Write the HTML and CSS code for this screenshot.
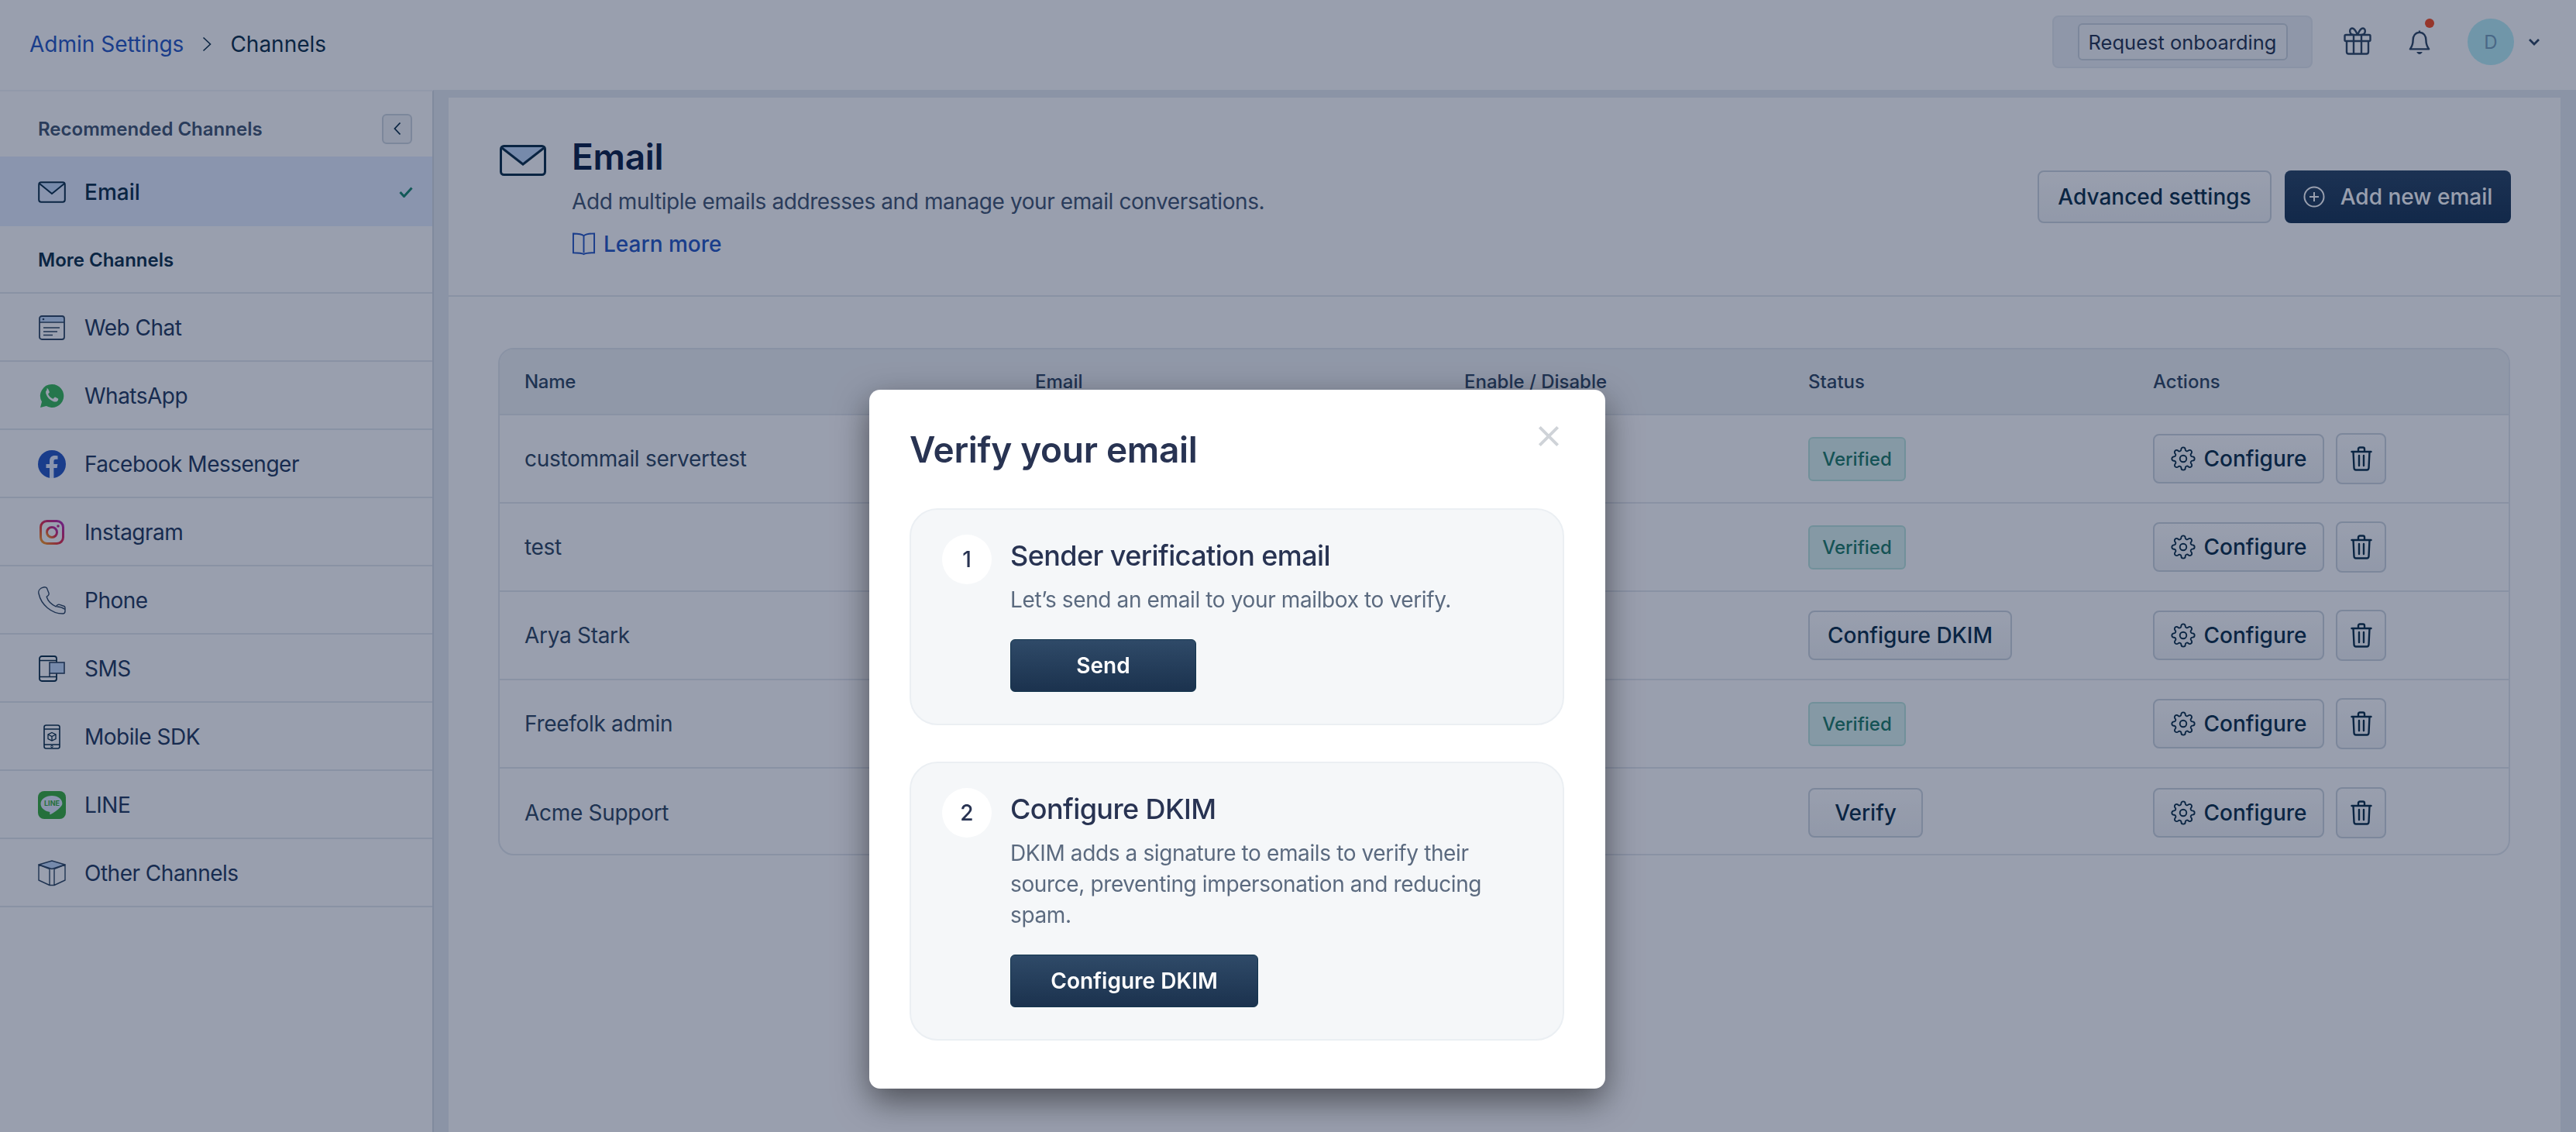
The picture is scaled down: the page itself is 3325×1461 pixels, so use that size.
FILE: index.html

```html
<!DOCTYPE html>
<html lang="en">
<head>
  <meta charset="UTF-8" />
  <meta name="viewport" content="width=device-width, initial-scale=1.0" />
  <title>Channels - Email</title>
  <link rel="stylesheet" href="styles.css">
</head>
<body>
  <svg class="defs" width="0" height="0">
    <symbol id="gear" viewBox="0 0 24 24">
      <circle cx="12" cy="12" r="3.2" fill="none" stroke="currentColor" stroke-width="1.4"/>
      <path fill="none" stroke="currentColor" stroke-width="1.4" d="M19.4 15a1.65 1.65 0 0 0 .33 1.82l.06.06a2 2 0 0 1 0 2.83 2 2 0 0 1-2.83 0l-.06-.06a1.65 1.65 0 0 0-1.82-.33 1.65 1.65 0 0 0-1 1.51V21a2 2 0 0 1-2 2 2 2 0 0 1-2-2v-.09A1.65 1.65 0 0 0 9 19.4a1.65 1.65 0 0 0-1.82.33l-.06.06a2 2 0 0 1-2.83 0 2 2 0 0 1 0-2.83l.06-.06a1.65 1.65 0 0 0 .33-1.82 1.65 1.65 0 0 0-1.51-1H3a2 2 0 0 1-2-2 2 2 0 0 1 2-2h.09A1.65 1.65 0 0 0 4.6 9a1.65 1.65 0 0 0-.33-1.82l-.06-.06a2 2 0 0 1 0-2.83 2 2 0 0 1 2.83 0l.06.06a1.65 1.65 0 0 0 1.82.33H9a1.65 1.65 0 0 0 1-1.51V3a2 2 0 0 1 2-2 2 2 0 0 1 2 2v.09a1.65 1.65 0 0 0 1 1.51 1.65 1.65 0 0 0 1.82-.33l.06-.06a2 2 0 0 1 2.83 0 2 2 0 0 1 0 2.83l-.06.06a1.65 1.65 0 0 0-.33 1.82V9a1.65 1.65 0 0 0 1.51 1H21a2 2 0 0 1 2 2 2 2 0 0 1-2 2h-.09a1.65 1.65 0 0 0-1.51 1z"/>
    </symbol>
    <symbol id="trash" viewBox="0 0 28 32">
      <path fill="none" stroke="currentColor" stroke-width="2.4" stroke-linecap="round" stroke-linejoin="round" d="M1.5 7h25M10 7V3.5c0-1 .8-2 2-2h4c1.200 0 2 1 2 2V7M3.500 7l1 21c.1 1.600 1 2.500 2.500 2.500h14c1.500 0 2.400-.9 2.500-2.500l1-21M11 12v13M17 12v13"/>
    </symbol>
  </svg>

  <header class="topbar">
    <nav class="crumbs">
      <a class="crumb-link">Admin Settings</a>
      <svg class="crumb-sep" viewBox="0 0 12 20"><path d="M1.500 1.500L10.500 10l-9 8.500" fill="none" stroke="currentColor" stroke-width="1.600"/></svg>
      <span class="crumb-here">Channels</span>
    </nav>
    <div class="top-right">
      <div class="onboard-box"><button class="onboard-btn">Request onboarding</button></div>
      <svg class="gift" viewBox="0 0 36 36" fill="none" stroke="currentColor" stroke-width="2.400" stroke-linejoin="round">
        <rect x="1.500" y="10" width="33" height="8" rx="1.500"/>
        <path d="M4 18v14c0 1.500 1 2.500 2.500 2.500h23c1.500 0 2.500-1 2.500-2.500V18M13 10v24.500M23 10v24.500M18 10c-2-5-4-8.500-7-8.500-4 0-4 8.500 2 8.500M18 10c2-5 4-8.500 7-8.500 4 0 4 8.500-2 8.500"/>
      </svg>
      <span class="bell-wrap">
        <svg class="bell" viewBox="0 0 30 34" fill="none" stroke="currentColor" stroke-width="2.600" stroke-linejoin="round">
          <path d="M15 3.500c-6 0-9 5-9 10.500 0 6-1.500 9-4 12.500h26c-2.500-3.500-4-6.500-4-12.500 0-5.500-3-10.500-9-10.500zM15 1v2.500"/>
          <path d="M11 30.500h8c-.8 2-2.200 3-4 3s-3.200-1-4-3z" fill="currentColor" stroke="none"/>
        </svg>
        <i class="bell-dot"></i>
      </span>
      <span class="avatar">D</span>
      <svg class="caret" viewBox="0 0 16 10"><path d="M2 2l6 6 6-6" fill="none" stroke="currentColor" stroke-width="2.800"/></svg>
    </div>
  </header>

  <div class="layout">
    <aside class="sidebar">
      <div class="side-head">
        <span class="side-title muted">Recommended Channels</span>
        <button class="collapse">
          <svg viewBox="0 0 10 18" width="10" height="18"><path d="M8.500 1.500L1.500 9l7 7.500" fill="none" stroke="currentColor" stroke-width="1.800"/></svg>
        </button>
      </div>
      <a class="side-item active">
        <span class="side-icon">
          <svg viewBox="0 0 36 28" width="36" height="28"><path d="M1.500 4c0-1.500 1-2.500 2.500-2.500h28c1.500 0 2.500 1 2.500 2.500l-16.500 13z" fill="#c5dcfa"/><rect x="1.200" y="1.200" width="33.600" height="25.600" rx="3" fill="none" stroke="#12344d" stroke-width="2"/><path d="M2 3l16 13L34 3" fill="none" stroke="#12344d" stroke-width="2"/></svg>
        </span>
        <span>Email</span>
        <svg class="tick" viewBox="0 0 18 14"><path d="M1.500 7l5 5.500L16.500 1.500" fill="none" stroke="#1f8a70" stroke-width="3"/></svg>
      </a>
      <div class="side-head side-head-more">
        <span class="side-title">More Channels</span>
      </div>
      <a class="side-item">
        <span class="side-icon">
          <svg viewBox="0 0 34 32" width="34" height="32"><path d="M1 9V4c0-1.700 1.300-3 3-3h26c1.700 0 3 1.300 3 3v5z" fill="#c5dcfa"/><rect x="1" y="1" width="32" height="30" rx="3" fill="none" stroke="#344c66" stroke-width="1.800"/><path d="M1 9h32M6 16h21M6 21h18M6 25.500h12" fill="none" stroke="#344c66" stroke-width="1.600"/><circle cx="6" cy="5" r="1.300" fill="#344c66"/></svg>
        </span>
        <span>Web Chat</span>
      </a>
      <a class="side-item">
        <span class="side-icon">
          <svg viewBox="0 0 36 36" width="36" height="36"><path d="M18 3a15 15 0 0 0-13 22.500L3 33l7.800-2A15 15 0 1 0 18 3z" fill="#3fbb5c"/><path d="M12 10c-1.700 1-2.400 3-1.500 5.500 1.500 4.500 5 8 9.500 9.700 2.500.9 4.800.2 5.800-1.500.5-1 .5-1.800.2-2.200l-3.700-2c-.5-.2-.9 0-1.200.4l-1.200 1.500c-.3.300-.6.400-1 .2-2.600-1.100-4.500-3-5.600-5.500-.2-.4-.1-.7.200-1l1.100-1.300c.3-.3.3-.7.200-1.100l-1.700-3.700c-.4-.5-1.300-.6-2.100 0z" fill="#fff"/></svg>
        </span>
        <span>WhatsApp</span>
      </a>
      <a class="side-item">
        <span class="side-icon">
          <svg viewBox="0 0 36 36" width="36" height="36"><circle cx="18" cy="18" r="18" fill="#2c5cc5"/><path d="M15 36V23h-4.500v-5H15v-4c0-4.500 2.700-7 6.800-7 2 0 3.700.3 3.700.3v4.400h-2.300c-2.200 0-2.800 1.400-2.800 2.800V18h5l-.8 5H20.400v13z" fill="#e6eeff"/></svg>
        </span>
        <span>Facebook Messenger</span>
      </a>
      <a class="side-item">
        <span class="side-icon">
          <svg viewBox="0 0 32 32" width="32" height="32">
            <defs><linearGradient id="ig" x1="0" y1="1" x2="1" y2="0"><stop offset="0" stop-color="#f9a825"/><stop offset=".45" stop-color="#e8304a"/><stop offset="1" stop-color="#b32dbb"/></linearGradient></defs>
            <rect x="1.500" y="1.500" width="29" height="29" rx="8" fill="none" stroke="url(#ig)" stroke-width="3"/><circle cx="16" cy="16" r="6.500" fill="none" stroke="url(#ig)" stroke-width="3"/><circle cx="24" cy="8" r="1.800" fill="#c82c8e"/></svg>
        </span>
        <span>Instagram</span>
      </a>
      <a class="side-item">
        <span class="side-icon">
          <svg viewBox="0 0 36 36" width="36" height="36"><path d="M7 1c2-.6 3.500-.3 4.500 1l2.500 6.500c.4 1.200.2 2-.8 3l-2 1.800c1.500 5 6 9.800 12 12.500l2-2c.8-.7 1.800-.8 2.800-.5l6 2.200c1 .4 1 1 1 2v4.500c0 1.500-.8 3-3 3-14.500 0-28-11.500-31-26C0 5 3 2 7 1z" fill="none" stroke="#344c66" stroke-width="1.400"/><path d="M24.500 26c3 0 7 1 10.500 3.500" fill="none" stroke="#344c66" stroke-width="1.400"/></svg>
        </span>
        <span>Phone</span>
      </a>
      <a class="side-item">
        <span class="side-icon">
          <svg viewBox="0 0 34 34" width="34" height="34"><rect x="1" y="1" width="22" height="32" rx="3" fill="none" stroke="#12344d" stroke-width="1.800"/><path d="M1 6.500h22M1 27.500h22" stroke="#12344d" stroke-width="1.600"/><rect x="14" y="9" width="19" height="14" fill="#c5dcfa" stroke="#344c66" stroke-width="1.600"/><path d="M14 23v4" stroke="#344c66" stroke-width="1.600"/></svg>
        </span>
        <span>SMS</span>
      </a>
      <a class="side-item">
        <span class="side-icon">
          <svg viewBox="0 0 22 32" width="22" height="32"><rect x="1" y="1" width="20" height="30" rx="2.500" fill="none" stroke="#12344d" stroke-width="1.600"/><path d="M1 6h20M1 26h20" stroke="#12344d" stroke-width="1.400"/><path d="M11 10.500l5 2.500v5.500l-5 2.500-5-2.500V13zM6 13l5 2.500 5-2.500M11 15.500V21" fill="none" stroke="#12344d" stroke-width="1.300"/><circle cx="11" cy="28.500" r="1.300" fill="none" stroke="#12344d" stroke-width="1"/></svg>
        </span>
        <span>Mobile SDK</span>
      </a>
      <a class="side-item">
        <span class="side-icon">
          <svg viewBox="0 0 36 36" width="36" height="36"><rect width="36" height="36" rx="8" fill="#3fb142"/><path d="M18 6c-8 0-14.500 4.600-14.500 10.500 0 5 4.700 9.200 11 10.200 1.200.3.900 1.200.7 2.700 0 .7.500 1 1.200.6 4-2.200 9-5.300 12-8.700 2-2 3-4 3-4.800C31.500 10.600 26 6 18 6z" fill="#e6eeff"/></svg>
          <span class="line-word">LINE</span>
        </span>
        <span>LINE</span>
      </a>
      <a class="side-item">
        <span class="side-icon">
          <svg viewBox="0 0 36 34" width="36" height="34"><path d="M18 1l17 5-17 5.500L1 6z" fill="#c5dcfa" stroke="#344c66" stroke-width="1.400" stroke-linejoin="round"/><path d="M1 6v20l14 6.500V11.500zM35 6v20l-14 6.500V11.500zM15 32.500h6" fill="none" stroke="#344c66" stroke-width="1.400" stroke-linejoin="round"/></svg>
        </span>
        <span>Other Channels</span>
      </a>
    </aside>

    <main class="panel">
      <section class="panel-head">
        <div class="head-left">
          <svg class="head-icon" viewBox="0 0 60 40"><path d="M2 5c0-2 1-3 3-3h50c2 0 3 1 3 3L30 25z" fill="#c5dcfa"/><rect x="1.500" y="1.500" width="57" height="37" rx="4" fill="none" stroke="#12344d" stroke-width="3"/><path d="M3 4l27 21L57 4" fill="none" stroke="#12344d" stroke-width="3"/></svg>
          <div class="head-text">
            <h1>Email</h1>
            <p>Add multiple emails addresses and manage your email conversations.</p>
            <a class="learn">
              <svg viewBox="0 0 32 32" width="31" height="31" fill="none" stroke="currentColor" stroke-width="2"><path d="M16 4.500V27M16 4.500C14 2.500 10 1.500 2 1.500V27c8 0 12 .5 14 2 2-1.500 6-2 14-2V1.500c-8 0-12 1-14 3z"/></svg>
              Learn more
            </a>
          </div>
        </div>
        <div class="head-actions">
          <button class="btn btn-advanced">Advanced settings</button>
          <button class="btn btn-dark">
            <svg viewBox="0 0 28 28" width="28" height="28" fill="none" stroke="currentColor" stroke-width="2"><circle cx="14" cy="14" r="12.500"/><path d="M14 8v12M8 14h12"/></svg>
            Add new email
          </button>
        </div>
      </section>

      <section class="table">
        <div class="row row-head">
          <div class="col-name">Name</div>
          <div class="col-email">Email</div>
          <div class="col-toggle">Enable / Disable</div>
          <div class="col-status">Status</div>
          <div class="col-actions">Actions</div>
        </div>
        <div class="row">
          <div class="col-name">custommail servertest</div>
          <div class="col-email"></div>
          <div class="col-toggle"></div>
          <div class="col-status"><span class="badge">Verified</span></div>
          <div class="col-actions">
            <button class="btn btn-row"><svg width="32" height="32"><use href="#gear"/></svg>Configure</button>
            <button class="btn-trash"><svg width="28" height="32"><use href="#trash"/></svg></button>
          </div>
        </div>
        <div class="row">
          <div class="col-name">test</div>
          <div class="col-email"></div>
          <div class="col-toggle"></div>
          <div class="col-status"><span class="badge">Verified</span></div>
          <div class="col-actions">
            <button class="btn btn-row"><svg width="32" height="32"><use href="#gear"/></svg>Configure</button>
            <button class="btn-trash"><svg width="28" height="32"><use href="#trash"/></svg></button>
          </div>
        </div>
        <div class="row">
          <div class="col-name">Arya Stark</div>
          <div class="col-email"></div>
          <div class="col-toggle"></div>
          <div class="col-status"><button class="btn btn-row btn-dkim">Configure DKIM</button></div>
          <div class="col-actions">
            <button class="btn btn-row"><svg width="32" height="32"><use href="#gear"/></svg>Configure</button>
            <button class="btn-trash"><svg width="28" height="32"><use href="#trash"/></svg></button>
          </div>
        </div>
        <div class="row">
          <div class="col-name">Freefolk admin</div>
          <div class="col-email"></div>
          <div class="col-toggle"></div>
          <div class="col-status"><span class="badge">Verified</span></div>
          <div class="col-actions">
            <button class="btn btn-row"><svg width="32" height="32"><use href="#gear"/></svg>Configure</button>
            <button class="btn-trash"><svg width="28" height="32"><use href="#trash"/></svg></button>
          </div>
        </div>
        <div class="row row-last">
          <div class="col-name">Acme Support</div>
          <div class="col-email"></div>
          <div class="col-toggle"></div>
          <div class="col-status"><button class="btn btn-row btn-verify">Verify</button></div>
          <div class="col-actions">
            <button class="btn btn-row"><svg width="32" height="32"><use href="#gear"/></svg>Configure</button>
            <button class="btn-trash"><svg width="28" height="32"><use href="#trash"/></svg></button>
          </div>
        </div>
      </section>
    </main>
  </div>

  <div class="overlay">
    <div class="modal">
      <svg class="modal-close" viewBox="0 0 24 24"><path d="M2 2l20 20M22 2L2 22" fill="none" stroke="currentColor" stroke-width="3.400"/></svg>
      <h2>Verify your email</h2>
      <div class="step">
        <span class="step-num">1</span>
        <div class="step-body">
          <h3>Sender verification email</h3>
          <p>Let’s send an email to your mailbox to verify.</p>
          <button class="btn-primary btn-send">Send</button>
        </div>
      </div>
      <div class="step">
        <span class="step-num">2</span>
        <div class="step-body">
          <h3>Configure DKIM</h3>
          <p>DKIM adds a signature to emails to verify their source, preventing impersonation and reducing spam.</p>
          <button class="btn-primary btn-config">Configure DKIM</button>
        </div>
      </div>
    </div>
  </div>
</body>
</html>
```

FILE: styles.css

```css
* {
  box-sizing: border-box;
}
html, body {
  margin: 0;
  height: 100%;
}
body {
  font-family: Inter, "Liberation Sans", sans-serif;
  font-size: 28px;
  color: #12344d;
  background: #e8edf2;
  overflow: hidden;
}
button {
  font-family: inherit;
  white-space: nowrap;
}
.defs {
  position: absolute;
}

/* top bar */
.topbar {
  height: 116px;
  background: #fff;
  display: flex;
  align-items: center;
  justify-content: space-between;
  padding: 0 0 0 38px;
}
.crumbs {
  display: flex;
  align-items: center;
  font-size: 28px;
  margin-top: -2px;
}
.crumb-link {
  color: #2c5cc5;
}
.crumb-sep {
  width: 12px;
  height: 20px;
  margin: 0 24px;
  color: #12344d;
}
.top-right {
  display: flex;
  align-items: center;
  align-self: flex-start;
  padding-top: 20px;
  padding-right: 46px;
}
.onboard-box {
  width: 336px;
  height: 68px;
  display: flex;
  align-items: center;
  justify-content: center;
  background: #eef2f7;
  border: 2px solid #e6ebf1;
  border-radius: 8px;
}
.onboard-btn {
  width: 271px;
  height: 48px;
  font-size: 25.5px;
  color: #2a3a55;
  background: #f7f9fb;
  border: 2px solid #cfd7df;
  border-radius: 6px;
  padding: 0;
}
.gift {
  width: 36px;
  height: 36px;
  margin: -2px 0 0 40px;
  color: #344c66;
}
.bell-wrap {
  position: relative;
  margin: 0 0 0 48px;
  display: flex;
}
.bell {
  width: 28px;
  height: 33px;
  color: #344c66;
}
.bell-dot {
  position: absolute;
  left: 21px;
  top: -14px;
  width: 12px;
  height: 12px;
  border-radius: 50%;
  background: #fa5026;
}
.avatar {
  width: 60px;
  height: 60px;
  margin-left: 48px;
  border-radius: 50%;
  background: #bbf0f7;
  color: #7ba3bd;
  font-size: 24px;
  display: flex;
  align-items: center;
  justify-content: center;
}
.caret {
  width: 16px;
  height: 10px;
  margin-left: 18px;
  color: #344c66;
}

/* sidebar + panel */
.layout {
  display: flex;
  height: 1345px;
}
.sidebar {
  width: 560px;
  flex: none;
  background: #fff;
  border-top: 2px solid #f3f5f8;
  border-right: 2px solid #d5dce4;
}
.side-head {
  height: 84px;
  padding: 12px 26px 0 49px;
  display: flex;
  align-items: center;
  justify-content: space-between;
}
.side-head-more {
  height: 87px;
  padding-top: 2px;
  border-bottom: 2px solid #e4e9ef;
}
.side-title {
  font-size: 24px;
  font-weight: 600;
}
.side-title.muted {
  color: #475a75;
}
.collapse {
  width: 39px;
  height: 39px;
  padding: 0;
  display: flex;
  align-items: center;
  justify-content: center;
  color: #12344d;
  background: #f3f5f7;
  border: 2px solid #cfd7df;
  border-radius: 6px;
}
.side-item {
  height: 88px;
  padding: 2px 25px 0 49px;
  display: flex;
  align-items: center;
  font-size: 28px;
  letter-spacing: -0.5px;
  color: #283f63;
  border-bottom: 2px solid #e4e9ef;
}
.side-item.active {
  height: 90px;
  font-weight: 500;
  letter-spacing: 0;
  color: #12344d;
  background: #e6eeff;
  border-bottom: 0;
}
.side-icon {
  position: relative;
  width: 36px;
  height: 36px;
  margin-right: 24px;
  flex: none;
  display: flex;
  align-items: center;
  justify-content: center;
}
.line-word {
  position: absolute;
  top: 10px;
  left: 0;
  right: 0;
  text-align: center;
  font-size: 9px;
  font-weight: 700;
  letter-spacing: 0;
  color: #3fb142;
}
.tick {
  width: 18px;
  height: 14px;
  margin-left: auto;
}
.panel {
  width: 2726px;
  margin: 10px 20px 0 19px;
  background: #fff;
}
.panel-head {
  height: 257px;
  padding: 0 64px 0 64px;
  display: flex;
  align-items: center;
  justify-content: space-between;
  border-bottom: 2px solid #e4e9ef;
}
.head-left {
  display: flex;
  align-items: flex-start;
  align-self: flex-start;
  padding-top: 50px;
}
.head-icon {
  width: 60px;
  height: 40px;
  margin: 11px 33px 0 2px;
}
.head-text h1 {
  margin: 0;
  font-size: 46px;
  line-height: 52px;
  font-weight: 600;
  letter-spacing: -0.3px;
  color: #12264a;
}
.head-text p {
  margin: 12px 0 0;
  font-size: 28px;
  line-height: 40px;
  letter-spacing: -0.41px;
  color: #475a75;
}
.learn {
  margin-top: 18px;
  display: flex;
  align-items: center;
  gap: 10px;
  font-size: 28px;
  font-weight: 500;
  color: #2c5cc5;
}
.head-actions {
  display: flex;
  gap: 17px;
}
.btn {
  height: 68px;
  padding: 0 24px;
  display: inline-flex;
  align-items: center;
  justify-content: center;
  font-size: 28px;
  font-weight: 500;
  color: #12344d;
  background: linear-gradient(#fff, #f3f5f7);
  border: 2px solid #cfd7df;
  border-radius: 8px;
}
.btn-advanced {
  width: 302px;
}
.btn-dark {
  width: 292px;
  padding: 0;
  gap: 20px;
  color: #fff;
  background: linear-gradient(#2f4a68, #1f3a58);
  border: 0;
}

/* table */
.table {
  margin: 66px 65px 0 64px;
  height: 655px;
  border: 2px solid #e4e9ef;
  border-radius: 20px;
  overflow: hidden;
}
.row {
  height: 114px;
  display: flex;
  align-items: center;
  padding-left: 32px;
  border-bottom: 2px solid #e4e9ef;
  color: #344c66;
}
.row-head {
  height: 85px;
  font-size: 24px;
  font-weight: 500;
  background: #f0f3f5;
}
.row-last {
  border-bottom: 0;
}
.col-name {
  width: 659px;
  letter-spacing: -0.3px;
}
.col-email {
  width: 554px;
}
.col-toggle {
  width: 444px;
}
.col-status {
  width: 445px;
}
.col-actions {
  display: flex;
  align-items: center;
  gap: 15px;
}
.badge {
  width: 126px;
  height: 57px;
  display: flex;
  align-items: center;
  justify-content: center;
  font-size: 24px;
  font-weight: 500;
  color: #24806c;
  background: #def5f0;
  border: 2px solid #bde7de;
  border-radius: 6px;
}
.btn-row {
  width: 221px;
  height: 64px;
  padding: 0;
  gap: 11px;
}
.btn-dkim {
  width: 263px;
}
.btn-verify {
  width: 148px;
}
.btn-trash {
  width: 65px;
  height: 66px;
  padding: 0;
  display: flex;
  align-items: center;
  justify-content: center;
  color: #12344d;
  background: linear-gradient(#fff, #f3f5f7);
  border: 2px solid #cfd7df;
  border-radius: 8px;
}

/* modal */
.overlay {
  position: fixed;
  inset: 0;
  background: rgba(0, 15, 52, 0.4);
  padding: 503px 0 0 1122px;
}
.modal {
  position: relative;
  width: 950px;
  height: 902px;
  padding: 51px 53px 0 52px;
  background: #fff;
  border-radius: 14px;
  box-shadow: 0 16px 44px rgba(0, 0, 0, 0.5);
}
.modal-close {
  position: absolute;
  top: 46px;
  right: 59px;
  width: 28px;
  height: 28px;
  color: #cfd3d8;
}
.modal h2 {
  margin: 0 0 50px;
  font-size: 46px;
  line-height: 52px;
  font-weight: 600;
  letter-spacing: -0.3px;
  color: #283352;
}
.step {
  display: flex;
  align-items: flex-start;
  gap: 24px;
  padding: 32px 40px 41px 40px;
  margin-bottom: 47px;
  background: #f5f7f9;
  border: 2px solid #ebeff3;
  border-radius: 36px;
}
.step-num {
  width: 64px;
  height: 64px;
  flex: none;
  display: flex;
  align-items: center;
  justify-content: center;
  font-size: 28px;
  font-weight: 500;
  color: #283352;
  background: #fff;
  border-radius: 50%;
}
.step-body h3 {
  margin: 0 0 10px;
  font-size: 36px;
  line-height: 54px;
  font-weight: 550;
  letter-spacing: -0.6px;
  color: #283352;
}
.step-body p {
  margin: 0 0 31px;
  font-size: 28px;
  line-height: 40px;
  letter-spacing: -0.38px;
  color: #5b6a7f;
}
.btn-primary {
  display: block;
  height: 68px;
  padding: 0;
  font-size: 28px;
  font-weight: 600;
  color: #fff;
  background: linear-gradient(#2f4a68, #1b324e);
  border: 1px solid #12344d;
  border-radius: 6px;
}
.btn-send {
  width: 240px;
}
.btn-config {
  width: 320px;
}
```
